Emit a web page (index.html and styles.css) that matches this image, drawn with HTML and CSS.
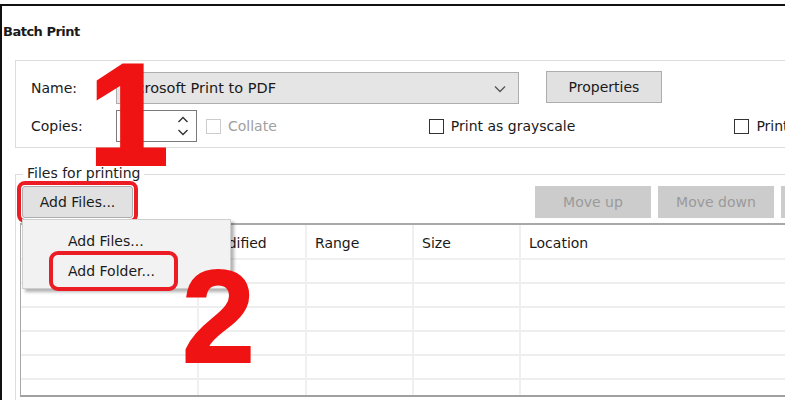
FILE: index.html
```html
<!DOCTYPE html>
<html>
<head>
  <title>Batch Print</title>
  <link rel="stylesheet" href="styles.css">
</head>
<body>
  <div class="window">
    <div class="title">Batch Print</div>

    <div class="group printer">
      <div class="row">
        <span class="label">Name:</span>
        <div class="combo">
          <span>Microsoft Print to PDF</span>
          <svg class="chev" width="12" height="8" viewBox="0 0 12 8"><polyline points="1,1.5 6,6.5 11,1.5" fill="none" stroke="#555" stroke-width="1.3"/></svg>
        </div>
        <div class="btn props">Properties</div>
      </div>
      <div class="row">
        <span class="label">Copies:</span>
        <div class="spin">
          <svg class="arrows" width="12" height="24" viewBox="0 0 12 24"><polyline points="1.5,8 6,3.5 10.5,8" fill="none" stroke="#333" stroke-width="1.4"/><polyline points="1.5,16 6,20.5 10.5,16" fill="none" stroke="#333" stroke-width="1.4"/></svg>
        </div>
        <label class="check disabled collate"><span class="box"></span>Collate</label>
        <label class="check gray"><span class="box"></span>Print as grayscale</label>
        <label class="check last"><span class="box"></span>Print to file</label>
      </div>
    </div>

    <div class="group files">
      <div class="legend">Files for printing</div>
      <div class="toolbar">
        <div class="btn add marked">Add Files...</div>
        <div class="spacer"></div>
        <div class="btn off">Move up</div>
        <div class="btn off">Move down</div>
        <div class="btn off">Remove</div>
      </div>
      <div class="table">
        <div class="tr head">
          <div class="c name">Name</div>
          <div class="c mod">Modified</div>
          <div class="c range">Range</div>
          <div class="c size">Size</div>
          <div class="c loc">Location</div>
        </div>
        <div class="tr"><div class="c name"></div><div class="c mod"></div><div class="c range"></div><div class="c size"></div><div class="c loc"></div></div>
        <div class="tr"><div class="c name"></div><div class="c mod"></div><div class="c range"></div><div class="c size"></div><div class="c loc"></div></div>
        <div class="tr"><div class="c name"></div><div class="c mod"></div><div class="c range"></div><div class="c size"></div><div class="c loc"></div></div>
        <div class="tr"><div class="c name"></div><div class="c mod"></div><div class="c range"></div><div class="c size"></div><div class="c loc"></div></div>
        <div class="tr"><div class="c name"></div><div class="c mod"></div><div class="c range"></div><div class="c size"></div><div class="c loc"></div></div>
        <div class="tr short"><div class="c name"></div><div class="c mod"></div><div class="c range"></div><div class="c size"></div><div class="c loc"></div></div>
      </div>

      <div class="menu">
        <div class="item">Add Files...</div>
        <div class="item marked">Add Folder...</div>
      </div>
    </div>

    <div class="step one">1</div>
    <div class="step two">2</div>
  </div>
</body>
</html>
```

FILE: styles.css
```css
body { margin: 0; background: #fff; overflow: hidden; font-family: "DejaVu Sans", sans-serif; font-size: 14px; color: #1a1a1a; }
.window { position: relative; margin-top: 4px; height: 396px; border-top: 2px solid #111; border-left: 2px solid #111; }
.title { padding: 18px 0 0 1px; font-weight: bold; font-size: 13px; letter-spacing: -0.5px; height: 20px; }

.group { border: 1px solid #dcdcdc; width: 900px; margin-left: 13px; }
.printer { margin-top: 16px; height: 88px; padding-top: 11px; box-sizing: border-box; }
.row { display: flex; align-items: center; padding-left: 15px; }
.row + .row { margin-top: 6px; }
.label { width: 85px; }

.combo { background: #e5e5e5; border: 1px solid #adadad; display: flex; align-items: center; justify-content: space-between; padding: 0 12px 0 3px; box-sizing: border-box; width: 403px; height: 32px; font-size: 14.5px; }
.chev { margin-top: 2px; }
.btn { background: #e1e1e1; border: 1px solid #adadad; display: flex; align-items: center; justify-content: center; box-sizing: border-box; }
.props { width: 116px; height: 32px; margin-left: 27px; margin-top: -2px; }

.spin { width: 81px; height: 32px; border: 1px solid #7a7a7a; box-sizing: border-box; display: flex; justify-content: flex-end; align-items: center; padding-right: 7px; }
.check { display: flex; align-items: center; }
.box { width: 13px; height: 13px; border: 1px solid #333; margin-right: 7px; background: #fff; }
.collate { margin-left: 9px; }
.disabled { color: #a0a0a0; }
.disabled .box { border-color: #cccccc; }
.gray { margin-left: 152px; }
.last { margin-left: 159px; }

.files { position: relative; margin-top: 26px; border-bottom: none; height: 300px; }
.legend { position: absolute; top: -10px; left: 7px; background: #fff; padding: 0 4px; color: #222; }
.toolbar { display: flex; margin: 11px 0 0 6px; gap: 7px; }
.toolbar .btn { height: 32px; }
.add { width: 111px; }
.marked { outline: 4px solid #ec1c24; outline-offset: 2px; border-radius: 2px; }
.toolbar .add.marked { outline-offset: 1px; border-radius: 3px; }
.spacer { width: 388px; }
.off { background: #cccccc; border-color: #cccccc; color: #9a9a9a; width: 116px; }

.table { margin: 5px 0 0 4px; border-top: 2px solid #a8a8a8; border-left: 1px solid #a8a8a8; border-bottom: 2px solid #a0a0a0; width: 880px; }
.tr { display: flex; height: 22px; border-bottom: 2px solid #eeeeee; }
.tr.head { height: 33px; border-bottom-color: #f0f0f0; align-items: center; }
.tr.short { height: 15px; border-bottom: none; }
.c { height: 100%; box-sizing: border-box; border-right: 2px solid #f0f0f0; display: flex; align-items: center; padding-left: 8px; }
.head .c { padding-top: 3px; }
.name { width: 178px; }
.mod { width: 108px; }
.range { width: 107px; }
.size { width: 107px; }
.loc { flex: 1; border-right: none; }

.menu { position: absolute; left: 6px; top: 44px; width: 209px; height: 70px; background: #f2f2f2; border: 1px solid #cfcfcf; box-shadow: 3px 3px 3px rgba(0,0,0,0.3); box-sizing: border-box; padding-top: 8px; }
.item { margin-left: 45px; height: 26px; display: flex; align-items: center; }
.menu .marked { display: inline-flex; margin-left: 32px; padding: 0 17px 0 13px; height: 28px; margin-top: 3px; outline-offset: 2px; border-radius: 3px; }

.step { position: absolute; font-family: "Liberation Sans", Arial, sans-serif; font-weight: bold; color: #f01313; -webkit-text-stroke: 2px #f01313; line-height: 1; }
.one { left: 87px; top: 38px; font-size: 142px; -webkit-text-stroke-width: 4px; }
.two { left: 180px; top: 245px; font-size: 131px; }
```
